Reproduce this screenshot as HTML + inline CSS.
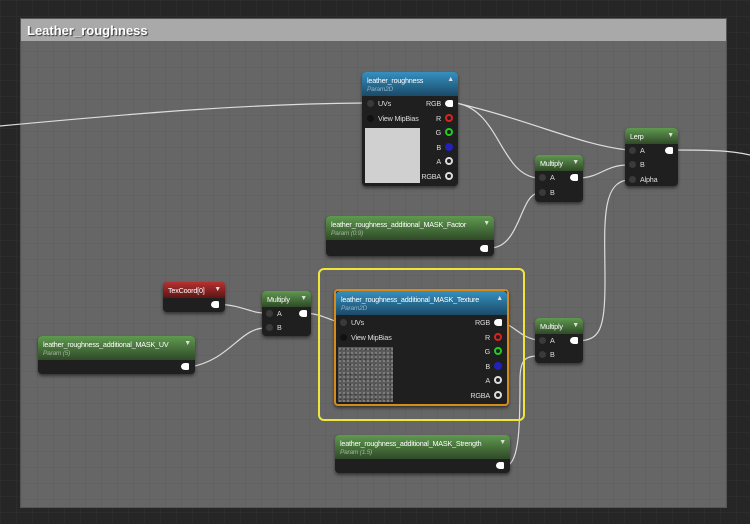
<!DOCTYPE html>
<html><head><meta charset="utf-8">
<style>
*{box-sizing:border-box;margin:0;padding:0}
body{width:750px;height:524px;overflow:hidden;background:#262626;font-family:"Liberation Sans",sans-serif;position:relative;
background-image:linear-gradient(#2c2c2c 1px,transparent 1px),linear-gradient(90deg,#2c2c2c 1px,transparent 1px);background-size:16px 16px}
.cm{position:absolute;left:20px;top:18px;width:707px;height:490px;background:#666;border:1px solid #555;
background-image:linear-gradient(rgba(0,0,0,.04) 1px,transparent 1px),linear-gradient(90deg,rgba(0,0,0,.04) 1px,transparent 1px);background-size:16px 16px}
.ch{position:absolute;left:21px;top:19px;width:705px;height:22px;background:#a9a9a9;color:#fff;font-weight:bold;font-size:13px;padding:4px 6px;text-shadow:1px 1px 1px #333}
.n{position:absolute;background:#1e1f1e;border-radius:4px;box-shadow:0 2px 3px rgba(0,0,0,.5);color:#ddd;font-size:7.2px;letter-spacing:-0.2px}
.h{border-radius:4px 4px 0 0;padding:4px 5px 3px;color:#fff;font-size:7.2px;position:relative;white-space:nowrap}
.h small{display:block;font-size:6.5px;font-style:italic;opacity:.5;margin-top:1px}
.g{background:linear-gradient(#5f9a4f,#2f4a28)}
.b{background:linear-gradient(#3590c0,#1b4a68)}
.r{background:linear-gradient(#b83030,#5a1616)}
.t{position:absolute;right:4px;top:4px;font-size:7px;color:#ddd}
.p{position:absolute;font-size:7.2px;color:#ddd}
.d{position:absolute;width:7px;height:7px;border-radius:50%;background:#3a3a3a}
.o{position:absolute;width:8px;height:7px;border-radius:50% 20% 20% 50%;background:#fff}
.ro{position:absolute;width:8px;height:8px;border-radius:50%;border:2px solid}
</style></head><body>
<div class="cm"></div><div class="ch">Leather_roughness</div>
<svg width="750" height="524" style="position:absolute;left:0;top:0" fill="none" stroke="#ddd" stroke-width="1.2">
<path d="M0 126 C150 112 250 104 364 103"/>
<path d="M456 103 C500 110 500 175 538 178"/>
<path d="M456 103 C530 120 580 145 628 150"/>
<path d="M578 178 C600 178 605 165 628 165"/>
<path d="M674 150 C700 150 730 150 750 155"/>
<path d="M490 248 C520 248 520 195 538 193"/>
<path d="M628 180 C600 182 605 230 605 280 C605 330 600 340 578 341"/>
<path d="M218 304 C245 306 250 313 265 313"/>
<path d="M190 367 C230 360 240 328 265 328"/>
<path d="M306 313 C320 314 325 318 338 322"/>
<path d="M500 322 C515 325 520 338 538 340"/>
<path d="M505 466 C520 466 520 420 520 380 C520 360 525 356 538 356"/>
</svg>
<div class="n" style="left:362px;top:72px;width:96px;height:114px">
<div class="h b">leather_roughness<small>Param2D</small><span class="t">▲</span></div>
<div class="d" style="left:5px;top:28px"></div><span class="p" style="left:16px;top:27px">UVs</span>
<div class="d" style="left:5px;top:43px;background:#111"></div><span class="p" style="left:16px;top:42px">View MipBias</span>
<div style="position:absolute;left:3px;top:56px;width:55px;height:55px;background:#d0d0d0"></div>
<span class="p" style="right:17px;top:27px">RGB</span><div class="o" style="right:5px;top:28px"></div>
<span class="p" style="right:17px;top:42px">R</span><div class="ro" style="right:5px;top:42px;border-color:#d22"></div>
<span class="p" style="right:17px;top:56px">G</span><div class="ro" style="right:5px;top:56px;border-color:#2c2"></div>
<span class="p" style="right:17px;top:71px">B</span><div class="ro" style="right:5px;top:71px;border-color:#22b;background:#22b"></div>
<span class="p" style="right:17px;top:85px">A</span><div class="ro" style="right:5px;top:85px;border-color:#ddd"></div>
<span class="p" style="right:17px;top:100px">RGBA</span><div class="ro" style="right:5px;top:100px;border-color:#ddd"></div>
</div>
<div class="n" style="left:625px;top:128px;width:53px;height:58px">
<div class="h g">Lerp<span class="t">▼</span></div>
<div class="d" style="left:4px;top:19px"></div><span class="p" style="left:15px;top:18px">A</span>
<div class="d" style="left:4px;top:33px"></div><span class="p" style="left:15px;top:32px">B</span>
<div class="d" style="left:4px;top:48px"></div><span class="p" style="left:15px;top:47px">Alpha</span>
<div class="o" style="left:40px;top:19px"></div></div>
<div class="n" style="left:535px;top:155px;width:48px;height:47px">
<div class="h g">Multiply<span class="t">▼</span></div>
<div class="d" style="left:4px;top:19px"></div><span class="p" style="left:15px;top:18px">A</span>
<div class="d" style="left:4px;top:34px"></div><span class="p" style="left:15px;top:33px">B</span>
<div class="o" style="left:35px;top:19px"></div></div>
<div class="n" style="left:326px;top:216px;width:168px;height:40px">
<div class="h g">leather_roughness_additional_MASK_Factor<small>Param (0.9)</small><span class="t">▼</span></div>
<div class="o" style="right:6px;top:29px"></div></div>
<div class="n" style="left:163px;top:282px;width:62px;height:30px">
<div class="h r">TexCoord[0]<span class="t">▼</span></div>
<div class="o" style="right:6px;top:19px"></div></div>
<div class="n" style="left:262px;top:291px;width:49px;height:45px">
<div class="h g">Multiply<span class="t">▼</span></div>
<div class="d" style="left:4px;top:19px"></div><span class="p" style="left:15px;top:18px">A</span>
<div class="d" style="left:4px;top:33px"></div><span class="p" style="left:15px;top:32px">B</span>
<div class="o" style="left:37px;top:19px"></div></div>
<div class="n" style="left:38px;top:336px;width:157px;height:38px">
<div class="h g">leather_roughness_additional_MASK_UV<small>Param (5)</small><span class="t">▼</span></div>
<div class="o" style="right:6px;top:27px"></div></div>
<div style="position:absolute;left:318px;top:268px;width:207px;height:153px;border:2px solid #f0e63a;border-radius:6px"></div>
<div class="n" style="left:334px;top:289px;width:175px;height:117px;border:2px solid #d58a1c">
<div class="h b">leather_roughness_additional_MASK_Texture<small>Param2D</small><span class="t">▲</span></div>
<div class="d" style="left:4px;top:28px"></div><span class="p" style="left:15px;top:27px">UVs</span>
<div class="d" style="left:4px;top:43px;background:#111"></div><span class="p" style="left:15px;top:42px">View MipBias</span>
<div style="position:absolute;left:2px;top:56px;width:55px;height:55px;background:#5a5a5a;background-image:radial-gradient(#888 0.8px,transparent 1px),radial-gradient(#3a3a3a 0.8px,transparent 1px);background-size:4px 4px,5px 5px"></div>
<span class="p" style="right:17px;top:27px">RGB</span><div class="o" style="right:5px;top:28px"></div>
<span class="p" style="right:17px;top:42px">R</span><div class="ro" style="right:5px;top:42px;border-color:#d22"></div>
<span class="p" style="right:17px;top:56px">G</span><div class="ro" style="right:5px;top:56px;border-color:#2c2"></div>
<span class="p" style="right:17px;top:71px">B</span><div class="ro" style="right:5px;top:71px;border-color:#22b;background:#22b"></div>
<span class="p" style="right:17px;top:85px">A</span><div class="ro" style="right:5px;top:85px;border-color:#ddd"></div>
<span class="p" style="right:17px;top:100px">RGBA</span><div class="ro" style="right:5px;top:100px;border-color:#ddd"></div>
</div>
<div class="n" style="left:535px;top:318px;width:48px;height:45px">
<div class="h g">Multiply<span class="t">▼</span></div>
<div class="d" style="left:4px;top:19px"></div><span class="p" style="left:15px;top:18px">A</span>
<div class="d" style="left:4px;top:33px"></div><span class="p" style="left:15px;top:32px">B</span>
<div class="o" style="left:35px;top:19px"></div></div>
<div class="n" style="left:335px;top:435px;width:175px;height:38px">
<div class="h g">leather_roughness_additional_MASK_Strength<small>Param (1.5)</small><span class="t">▼</span></div>
<div class="o" style="right:6px;top:27px"></div></div>
</body></html>
